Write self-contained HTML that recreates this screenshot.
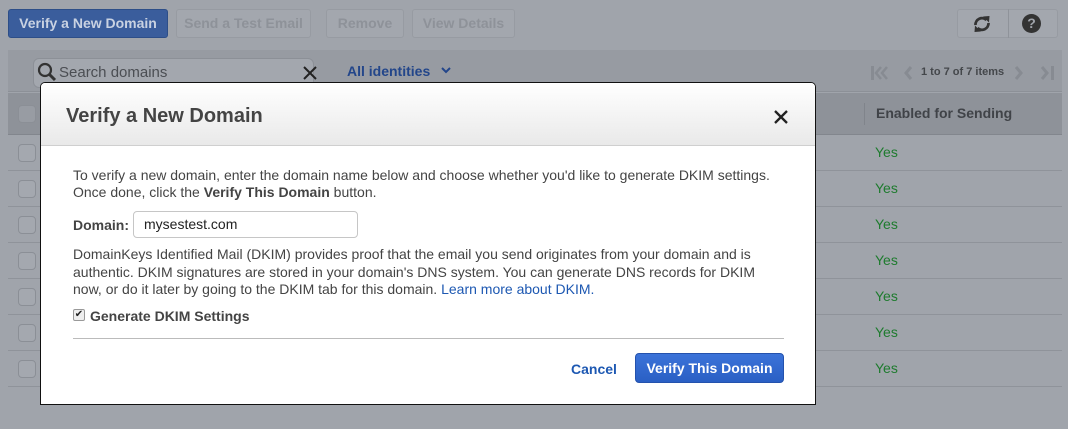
<!DOCTYPE html>
<html><head><style>
*{box-sizing:border-box;margin:0;padding:0}
body{width:1068px;height:429px;overflow:hidden;background:#a0a4ab;font-family:"Liberation Sans",Arial,sans-serif;position:relative;color:#444}
.abs{position:absolute}
.btn{position:absolute;top:9px;height:29px;border:1px solid #979ba2;border-radius:3px;background:#a3a7ae;color:#8e9299;font-weight:bold;font-size:14px;line-height:27px;text-align:center}
.row{position:absolute;left:8px;width:1054px;height:36px;border-bottom:1px solid #8f939a}
.cb{position:absolute;left:10px;top:9px;width:18px;height:18px;border:1px solid #8b8f96;border-radius:4px;background:#a4a8af}
.yes{position:absolute;left:867px;top:9px;color:#1e7b2e;font-size:14px}
</style></head><body>
<div class="btn" style="left:8px;width:160px;background:#3a5d9c;border-color:#2d4e88;color:#c9d2e2">Verify a New Domain</div>
<div class="btn" style="left:176px;width:135px">Send a Test Email</div>
<div class="btn" style="left:326px;width:78px">Remove</div>
<div class="btn" style="left:412px;width:103px">View Details</div>
<div class="btn" style="left:957px;width:101px"></div>
<div class="abs" style="left:1008px;top:9px;width:1px;height:29px;background:#8f939a"></div>
<svg class="abs" style="left:971px;top:13px" width="22" height="22" viewBox="0 0 22 22"><path d="M4.5 12a6.5 6.5 0 0 1 11-5M17.5 10a6.5 6.5 0 0 1-11 5" stroke="#333" stroke-width="2.8" fill="none"/><path d="M12 3.5l6.5-.5-.5 6.5zM10 18.5l-6.5.5.5-6.5z" fill="#333"/></svg>
<div class="abs" style="left:1022px;top:14px;width:19px;height:19px;border-radius:50%;background:#333;color:#a0a4ab;font-weight:bold;font-size:14px;text-align:center;line-height:19px">?</div>
<div class="abs" style="left:8px;top:50px;width:1054px;height:42px;background:#979ba2;border-bottom:1px solid #8c9097"></div>
<div class="abs" style="left:33px;top:58px;width:281px;height:30px;border:1px solid #8c9097;border-radius:6px;background:#a3a7ae"></div>
<svg class="abs" style="left:37px;top:62px" width="20" height="20"><circle cx="8" cy="8" r="6" stroke="#333" stroke-width="2.2" fill="none"/><path d="M12 12l6 6" stroke="#333" stroke-width="3"/></svg>
<div class="abs" style="left:59px;top:64px;font-size:15px;color:#4b4e53">Search domains</div>
<svg class="abs" style="left:303px;top:66px" width="14" height="14"><path d="M1 1l12 12M13 1L1 13" stroke="#222" stroke-width="2"/></svg>
<div class="abs" style="left:347px;top:63px;font-size:14px;font-weight:bold;color:#23468a">All identities</div>
<svg class="abs" style="left:441px;top:66px" width="10" height="8"><path d="M1 2l4 4 4-4" stroke="#23468a" stroke-width="2" fill="none"/></svg>
<svg class="abs" style="left:870px;top:64px" width="20" height="18"><rect x="1" y="2" width="3" height="14" fill="#878b92"/><path d="M11 3l-5 6 5 6M17 3l-5 6 5 6" stroke="#878b92" stroke-width="2.5" fill="none"/></svg>
<svg class="abs" style="left:900px;top:64px" width="14" height="18"><path d="M11 3l-5 6 5 6" stroke="#878b92" stroke-width="3" fill="none"/></svg>
<div class="abs" style="left:921px;top:66px;font-size:11px;font-weight:bold;color:#44474b">1 to 7 of 7 items</div>
<svg class="abs" style="left:1012px;top:64px" width="14" height="18"><path d="M4 3l5 6-5 6" stroke="#878b92" stroke-width="3" fill="none"/></svg>
<svg class="abs" style="left:1039px;top:64px" width="20" height="18"><path d="M3 3l5 6-5 6" stroke="#878b92" stroke-width="3" fill="none"/><rect x="12" y="2" width="3" height="14" fill="#878b92"/></svg>
<div class="row" style="top:93px;height:42px;background:#8e9299;border-bottom:1px solid #82868d"><div class="cb" style="top:12px;background:#989ca3"></div>
<div class="abs" style="left:856px;top:10px;width:1px;height:22px;background:#80848b"></div>
<div class="abs" style="left:868px;top:12px;font-weight:bold;font-size:14px;color:#404348">Enabled for Sending</div></div>
<div class="row" style="top:135px"><div class="cb"></div><div class="yes">Yes</div></div>
<div class="row" style="top:171px"><div class="cb"></div><div class="yes">Yes</div></div>
<div class="row" style="top:207px"><div class="cb"></div><div class="yes">Yes</div></div>
<div class="row" style="top:243px"><div class="cb"></div><div class="yes">Yes</div></div>
<div class="row" style="top:279px"><div class="cb"></div><div class="yes">Yes</div></div>
<div class="row" style="top:315px"><div class="cb"></div><div class="yes">Yes</div></div>
<div class="row" style="top:351px"><div class="cb"></div><div class="yes">Yes</div></div>

<div class="abs" style="left:40px;top:82px;width:776px;height:323px;background:#fff;border:1px solid #111;border-radius:5px 5px 0 0;overflow:hidden">
 <div style="height:63px;background:linear-gradient(#fff,#e9e9e9);border-bottom:1px solid #cfcfcf;position:relative">
  <div class="abs" style="left:25px;top:22px;font-size:20px;font-weight:bold;color:#444">Verify a New Domain</div>
  <svg class="abs" style="left:733px;top:27px" width="14" height="14"><path d="M1 1l12 12M13 1L1 13" stroke="#222" stroke-width="2.3"/></svg>
 </div>
 <div class="abs" style="left:32px;top:84px;font-size:14px;line-height:17px;color:#444;width:720px">To verify a new domain, enter the domain name below and choose whether you'd like to generate DKIM settings.<br>Once done, click the <b>Verify This Domain</b> button.</div>
 <div class="abs" style="left:32px;top:134px;font-size:14px;font-weight:bold;color:#444">Domain:</div>
 <div class="abs" style="left:92px;top:128px;width:225px;height:27px;border:1px solid #c6c6c6;border-radius:4px;font-size:14px;line-height:25px;padding-left:10px;color:#222">mysestest.com</div>
 <div class="abs" style="left:32px;top:163px;font-size:14px;line-height:17.5px;color:#444;width:705px">DomainKeys Identified Mail (DKIM) provides proof that the email you send originates from your domain and is authentic. DKIM signatures are stored in your domain's DNS system. You can generate DNS records for DKIM now, or do it later by going to the DKIM tab for this domain. <span style="color:#1d58b2">Learn more about DKIM.</span></div>
 <div class="abs" style="left:32px;top:226px;width:12px;height:12px;border:1px solid #999;border-radius:2px;background:#eee;font-size:10px;line-height:10px;text-align:center;color:#222">✔</div>
 <div class="abs" style="left:49px;top:225px;font-size:14px;font-weight:bold;color:#444">Generate DKIM Settings</div>
 <div class="abs" style="left:32px;top:255px;width:711px;height:1px;background:#bbb"></div>
 <div class="abs" style="left:530px;top:278px;font-size:14px;font-weight:bold;color:#1d58b2">Cancel</div>
 <div class="abs" style="left:594px;top:270px;width:149px;height:30px;border-radius:4px;background:linear-gradient(#3b73d9,#2a5fc4);border:1px solid #2452ad;color:#fff;font-size:14px;font-weight:bold;text-align:center;line-height:28px">Verify This Domain</div>
</div>
</body></html>
